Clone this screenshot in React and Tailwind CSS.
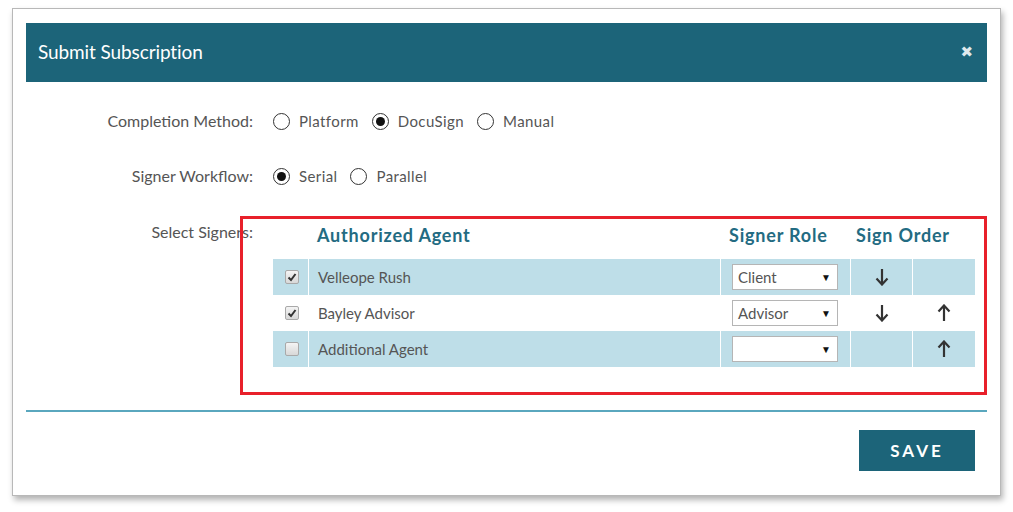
import React from "react";

const font = { fontFamily: "Lato, 'Open Sans', sans-serif" };

const Radio = ({ checked, label }) => (
  <label className="flex items-center gap-[9px] mr-[13px]">
    <span className="w-[17px] h-[17px] rounded-full border-[1.5px] border-[#333] flex items-center justify-center bg-white">
      {checked && <span className="w-[9px] h-[9px] rounded-full bg-[#111]" />}
    </span>
    <span className="tracking-[0.4px]">{label}</span>
  </label>
);

const Check = ({ checked }) => (
  <span className="w-[14px] h-[14px] rounded-[2px] border border-[#a9a9a9] bg-gradient-to-b from-[#f4f4f4] to-[#d8d8d8] flex items-center justify-center">
    {checked && (
      <svg width="10" height="10" viewBox="0 0 10 10">
        <path d="M1.5 5.5 L4 8 L8.5 2" fill="none" stroke="#333" strokeWidth="2" />
      </svg>
    )}
  </span>
);

const Arrow = ({ up }) => (
  <svg width="14" height="18" viewBox="0 0 14 18" className={up ? "rotate-180" : ""}>
    <path d="M7 1 V16" stroke="#333" strokeWidth="2.2" />
    <path d="M1.5 10.5 L7 16.5 L12.5 10.5" fill="none" stroke="#333" strokeWidth="2.2" />
  </svg>
);

const RoleSelect = ({ value }) => (
  <div className="w-[106px] h-[26px] bg-white border border-[#b5b5b5] flex items-center justify-between pl-[5px] pr-[6px] text-[15px] text-[#555]">
    <span>{value}</span>
    <span className="text-[10px] text-[#111]">▼</span>
  </div>
);

const rows = [
  { name: "Velleope Rush", checked: true, role: "Client", down: true, up: false, blue: true },
  { name: "Bayley Advisor", checked: true, role: "Advisor", down: true, up: true, blue: false },
  { name: "Additional Agent", checked: false, role: "", down: false, up: true, blue: true },
];

export default function App() {
  return (
    <div className="min-h-screen bg-white pt-2 pl-3" style={font}>
      <div className="relative w-[989px] h-[488px] bg-white border border-[#b8b8b8] shadow-[2px_4px_6px_rgba(0,0,0,0.3)] px-[13px] pt-[14px]">
        <div className="h-[59px] bg-[#1c6479] flex items-center justify-between pl-3 pr-[14px]">
          <span className="text-white text-[19px] tracking-[-0.1px]">Submit Subscription</span>
          <span className="text-[#dfe9ed] text-[15px]" style={{ fontFamily: "'DejaVu Sans', sans-serif" }}>✖</span>
        </div>

        <div className="mt-[27px] grid grid-cols-[227px_1fr] gap-x-5 gap-y-[31px] text-[15px] text-[#555]">
          <div className="h-6 flex items-center justify-end text-[16px]">Completion Method:</div>
          <div className="h-6 flex items-center">
            <Radio label="Platform" />
            <Radio checked label="DocuSign" />
            <Radio label="Manual" />
          </div>

          <div className="h-6 flex items-center justify-end text-[16px]">Signer Workflow:</div>
          <div className="h-6 flex items-center">
            <Radio checked label="Serial" />
            <Radio label="Parallel" />
          </div>

          <div className="flex justify-end pt-[1px] h-6 items-center text-[16px]">Select Signers:</div>
          <div className="w-[702px]">
            <div className="grid grid-cols-[35px_412px_130px_62px_63px] h-[40px] items-center pb-2 text-[18px] tracking-[0.8px] font-bold text-[#236b82]">
              <span />
              <span className="pl-[9px]">Authorized Agent</span>
              <span className="pl-[9px]">Signer Role</span>
              <span className="col-span-2 pl-[6px]">Sign Order</span>
            </div>
            {rows.map((r) => (
              <div
                key={r.name}
                className={`grid grid-cols-[35px_412px_130px_62px_63px] h-9 ${r.blue ? "bg-[#bedee8]" : "bg-white"}`}
              >
                <div className="flex items-center justify-center pl-[2px]">
                  <Check checked={r.checked} />
                </div>
                <div className="flex items-center pl-[9px] border-l border-white text-[#555]">{r.name}</div>
                <div className="flex items-center pl-[11px] border-l border-white">
                  <RoleSelect value={r.role} />
                </div>
                <div className="flex items-center justify-center border-l border-white">{r.down && <Arrow />}</div>
                <div className="flex items-center justify-center border-l border-white">{r.up && <Arrow up />}</div>
              </div>
            ))}
          </div>
        </div>

        <div className="mt-[43px] h-[2px] bg-[#5aa7be]" />
        <div className="flex justify-end pr-3 mt-[18px]">
          <button className="w-[116px] h-[41px] bg-[#1c6479] text-white font-bold text-[17px] tracking-[3px]">SAVE</button>
        </div>

        <div className="absolute left-[227px] top-[207px] w-[747px] h-[179px] border-[3px] border-[#e8202a] pointer-events-none" />
      </div>
    </div>
  );
}
